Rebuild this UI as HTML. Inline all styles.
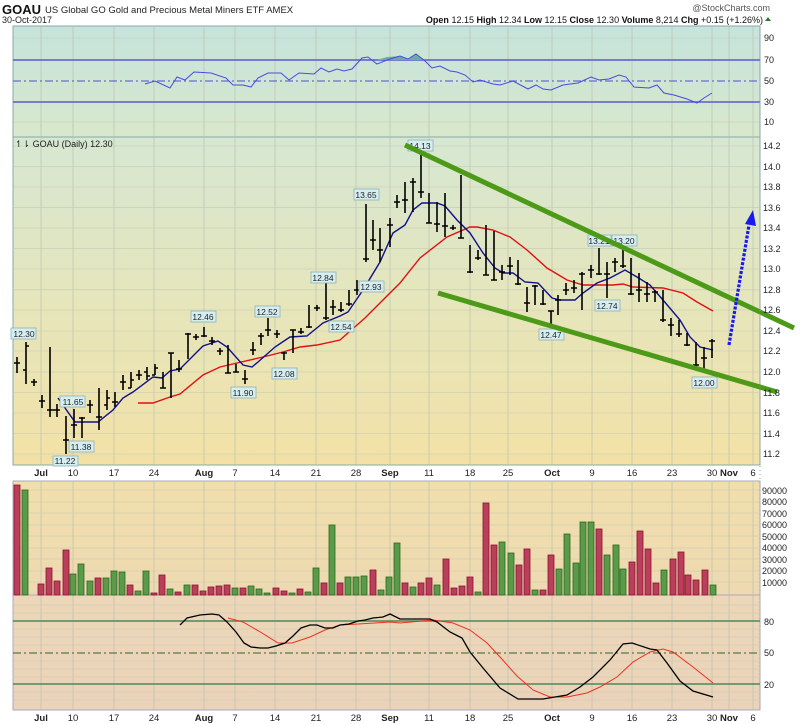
<!DOCTYPE html>
<html><head><meta charset="utf-8"><style>
html,body{margin:0;padding:0;background:#fff;width:800px;height:724px;overflow:hidden}
svg{display:block;font-family:"Liberation Sans",sans-serif}
</style></head><body>
<svg width="800" height="724" viewBox="0 0 800 724" xmlns="http://www.w3.org/2000/svg">
<defs>
<linearGradient id="gr" x1="0" y1="0" x2="0" y2="1"><stop offset="0" stop-color="#c6e3dc"/><stop offset="1" stop-color="#d8e8cc"/></linearGradient>
<linearGradient id="gp" x1="0" y1="0" x2="0" y2="1"><stop offset="0" stop-color="#d6e7d2"/><stop offset="0.45" stop-color="#e4e6be"/><stop offset="1" stop-color="#f3e1a6"/></linearGradient>
<linearGradient id="gv" x1="0" y1="0" x2="0" y2="1"><stop offset="0" stop-color="#f1dfab"/><stop offset="1" stop-color="#eed9b2"/></linearGradient>
<linearGradient id="gs" x1="0" y1="0" x2="0" y2="1"><stop offset="0" stop-color="#edd7b8"/><stop offset="1" stop-color="#ebd2ba"/></linearGradient>
</defs>
<!-- header -->
<text x="2" y="14" font-size="13" font-weight="bold" fill="#111">GOAU</text>
<text x="45" y="13" font-size="9.5" fill="#222">US Global GO Gold and Precious Metal Miners ETF  AMEX</text>
<text x="2" y="23" font-size="9" fill="#222">30-Oct-2017</text>
<text x="770" y="11" font-size="9" fill="#555" text-anchor="end">@StockCharts.com</text>
<text x="763" y="23" font-size="9" fill="#111" text-anchor="end"><tspan font-weight="bold">Open</tspan> 12.15 <tspan font-weight="bold">High</tspan> 12.34 <tspan font-weight="bold">Low</tspan> 12.15 <tspan font-weight="bold">Close</tspan> 12.30 <tspan font-weight="bold">Volume</tspan> 8,214 <tspan font-weight="bold">Chg</tspan> +0.15 (+1.26%)</text>
<polygon points="765,21 771,21 768,17" fill="#2a7a2a"/>

<!-- panels -->
<rect x="13" y="26" width="747" height="111" fill="url(#gr)" stroke="#8aa" stroke-width="1"/>
<rect x="13" y="137" width="747" height="328" fill="url(#gp)" stroke="#8aa" stroke-width="1"/>
<rect x="13" y="481" width="747" height="114" fill="url(#gv)" stroke="#aab" stroke-width="1"/>
<rect x="13" y="595" width="747" height="115" fill="url(#gs)" stroke="#aab" stroke-width="1"/>

<!-- vertical grid -->
<g stroke="#b8bfae" stroke-width="0.8" opacity="0.8">
<path d="M41 26V465M73 26V465M114 26V465M154 26V465M204 26V465M235 26V465M275 26V465M316 26V465M356 26V465M390 26V465M429 26V465M470 26V465M508 26V465M552 26V465M592 26V465M632 26V465M672 26V465M712 26V465M729 26V465M753 26V465"/>
<path d="M41 481V710M73 481V710M114 481V710M154 481V710M204 481V710M235 481V710M275 481V710M316 481V710M356 481V710M390 481V710M429 481V710M470 481V710M508 481V710M552 481V710M592 481V710M632 481V710M672 481V710M712 481V710M729 481V710M753 481V710"/>
</g>
<!-- horizontal grid price -->
<g stroke="#c4cab2" stroke-width="0.6">
<path d="M13 146H760M13 166.5H760M13 187H760M13 207.6H760M13 228H760M13 248.7H760M13 269H760M13 289.8H760M13 310H760M13 331H760M13 351H760M13 372H760M13 392.5H760M13 413H760M13 433.5H760M13 454H760"/>
<path d="M13 38H760M13 122H760"/>
<path d="M13 490H760M13 502H760M13 513H760M13 525H760M13 536H760M13 548H760M13 559H760M13 571H760M13 582H760"/>
<path d="M13 605H760M13 613H760M13 629H760M13 637H760M13 645H760M13 661H760M13 669H760M13 677H760M13 692H760M13 700H760"/>
</g>

<!-- RSI -->
<path d="M13 60H760M13 102H760" stroke="#5a5ad0" stroke-width="1.5"/>
<path d="M13 81H760" stroke="#6a6ad8" stroke-width="1.2" stroke-dasharray="8,3,2,3"/>
<polygon points="377,60 387,57 400,56 408,59 416,54 425,60" fill="#6aaea0"/>
<polyline fill="none" stroke="#4a4ae0" stroke-width="1" points="145,84 155,81 170,88 177,77 185,80 194,72 211,73 226,78 233,85 243,85 251,87 258,78 268,73 281,73 289,80 299,73 314,74 321,68 329,72 337,69 344,71 352,69 362,58 368,57 377,64 387,60 400,56 408,59 416,54 425,61 432,68 440,66 450,71 457,72 465,75 473,82 480,80 493,84 500,85 513,81 528,89 536,85 543,89 551,90 563,85 578,83 591,77 599,80 609,79 619,75 626,77 634,87 649,88 657,85 664,93 674,95 687,99 697,103 704,98 712,93"/>

<!-- price MAs -->
<polyline fill="none" stroke="#e01010" stroke-width="1.4" points="138,403 153,403 170,397 180,394 203,375 220,367 237,363 263,357 283,352 300,347 317,345 340,340 365,318 380,303 400,283 420,258 447,237 470,227 477,227 493,230 510,237 527,250 547,268 567,280 583,285 613,285 623,284 633,287 663,288 683,293 697,302 713,311"/>
<polyline fill="none" stroke="#10108a" stroke-width="1.4" points="58,398 75,422 98,422 113,410 123,398 133,392 153,377 162,378 170,371 180,369 203,346 218,341 227,347 243,365 252,367 258,362 275,347 290,337 307,336 323,323 340,316 348,312 363,290 380,262 393,233 405,225 413,210 422,203 437,203 445,206 457,220 470,233 483,253 495,268 503,273 513,273 525,282 538,283 552,298 560,300 575,300 583,293 597,283 610,278 625,270 637,277 650,285 663,300 680,320 690,337 700,347 713,350"/>

<!-- price bars -->
<path fill="none" stroke="#000" stroke-width="1.6" d="
M17 357V373M14 363h6
M26 342V384M26 346h3M23 370h3
M34 379V386M31 382h6
M42 395V408M39 401h6
M50 347V417M50 410h4M47 410h3
M57 404V417M54 410h6
M66 416V454M63 440h6
M74 409V438M71 425h6
M82 417V438M79 418h6
M90 400V413M87 405h6
M99 388V430M96 417h6
M107 390V410M104 405h3M107 398h3
M115 392V407M112 402h6
M123 375V390M120 382h6
M131 372V388M128 388h3M131 380h3
M139 370V380M136 375h6
M147 367V380M144 372h3M147 376h3
M155 364V375M152 375h3M155 368h3
M163 372V388M160 388h6
M171 353V398M168 353h6
M179 360V372M176 369h6
M188 333V359M185 334h6
M196 334V340M193 337h6
M204 327V337M201 336h6
M212 337V345M209 341h6
M220 348V355M217 351h6
M228 345V373M225 373h6
M236 364V372M233 372h6
M245 370V384M242 379h6
M253 342V355M250 350h6
M261 333V345M258 336h6
M268 318V336M265 330h6
M277 330V338M274 334h6
M284 352V360M281 353h6
M293 330V353M290 330h6
M301 328V334M298 332h6
M309 305V328M306 327h6
M317 305V311M314 308h6
M326 280V320M323 318h6
M333 300V315M330 307h6
M341 302V312M338 310h6
M349 290V306M346 304h6
M357 280V295M354 290h6
M366 204V262M363 259h6
M373 220V250M370 240h6
M380 228V262M377 250h6
M390 218V247M387 225h6
M397 195V208M394 202h6
M405 182V213M402 200h6
M413 178V212M410 182h6
M421 152V198M418 192h6
M429 193V223M426 223h6
M437 202V232M434 224h6
M445 193V237M442 226h6
M453 225V230M450 228h6
M461 175V238M458 238h6
M470 245V273M467 272h6
M478 250V260M475 258h6
M486 225V275M483 275h6
M494 231V280M491 280h6
M502 265V280M499 272h6
M510 257V275M507 266h6
M518 260V285M515 284h6
M527 287V312M524 303h6
M535 285V305M532 286h6
M543 290V305M540 304h6
M551 311V325M548 311h6
M558 295V315M555 300h6
M566 283V295M563 290h6
M574 280V293M571 288h6
M582 272V310M579 274h6
M591 265V278M588 270h6
M599 248V275M596 274h6
M607 262V298M604 274h6
M615 258V272M612 262h6
M623 250V268M620 266h6
M631 258V295M628 294h6
M639 273V302M636 290h6
M647 282V302M644 294h6
M655 290V302M652 292h6
M663 290V322M660 320h6
M671 318V336M668 325h6
M679 320V337M676 334h6
M687 333V346M684 345h6
M696 342V368M693 365h6
M704 347V370M701 358h6
M712 339V358M709 341h6"/>

<!-- price labels -->
<g font-size="8.5" fill="#223" text-anchor="middle">
<g fill="#d6eeee" stroke="#8fb0b8" stroke-width="0.8">
<rect x="11" y="328" width="25" height="11"/><rect x="60" y="396" width="25" height="11"/><rect x="69" y="441" width="25" height="11"/><rect x="53" y="456" width="25" height="10"/>
<rect x="191" y="311" width="25" height="11"/><rect x="231" y="387" width="25" height="11"/><rect x="255" y="306" width="25" height="11"/><rect x="272" y="368" width="25" height="11"/>
<rect x="311" y="272" width="25" height="11"/><rect x="329" y="321" width="25" height="11"/><rect x="354" y="189" width="25" height="11"/><rect x="359" y="281" width="25" height="11"/>
<rect x="408" y="140" width="25" height="11"/><rect x="539" y="329" width="25" height="11"/><rect x="588" y="235" width="23" height="11"/><rect x="612" y="235" width="25" height="11"/>
<rect x="595" y="300" width="25" height="11"/><rect x="692" y="377" width="25" height="11"/>
</g>
<text x="24" y="337">12.30</text><text x="73" y="405">11.65</text><text x="81" y="450">11.38</text><text x="65" y="464">11.22</text>
<text x="203" y="320">12.46</text><text x="243" y="396">11.90</text><text x="267" y="315">12.52</text><text x="284" y="377">12.08</text>
<text x="323" y="281">12.84</text><text x="341" y="330">12.54</text><text x="366" y="198">13.65</text><text x="371" y="290">12.93</text>
<text x="420" y="149">14.13</text><text x="551" y="338">12.47</text><text x="599" y="244">13.21</text><text x="624" y="244">13.20</text>
<text x="607" y="309">12.74</text><text x="704" y="386">12.00</text>
</g>

<!-- trend lines -->
<path d="M405 145L794 328M438 293L777 392" stroke="#4c9a18" stroke-width="5" stroke-linecap="butt"/>
<path d="M729 345L749 225" stroke="#1818f0" stroke-width="3.2" stroke-dasharray="3,1.5"/>
<polygon points="753,210 745,224 756,226" fill="#1818f0"/>

<text x="15" y="147" font-size="9" fill="#222">↿⇂ GOAU (Daily) 12.30</text>

<!-- right axis labels -->
<g font-size="9" fill="#222">
<text x="764" y="41">90</text><text x="764" y="63">70</text><text x="764" y="84">50</text><text x="764" y="105">30</text><text x="764" y="125">10</text>
<text x="763" y="149">14.2</text><text x="763" y="170">14.0</text><text x="763" y="190">13.8</text><text x="763" y="211">13.6</text><text x="763" y="231">13.4</text><text x="763" y="252">13.2</text><text x="763" y="272">13.0</text><text x="763" y="293">12.8</text><text x="763" y="313">12.6</text><text x="763" y="334">12.4</text><text x="763" y="354">12.2</text><text x="763" y="375">12.0</text><text x="763" y="396">11.8</text><text x="763" y="416">11.6</text><text x="763" y="437">11.4</text><text x="763" y="457">11.2</text>
<text x="762" y="494">90000</text><text x="762" y="505">80000</text><text x="762" y="517">70000</text><text x="762" y="528">60000</text><text x="762" y="540">50000</text><text x="762" y="551">40000</text><text x="762" y="563">30000</text><text x="762" y="574">20000</text><text x="762" y="586">10000</text>
<text x="764" y="625">80</text><text x="764" y="656">50</text><text x="764" y="688">20</text>
</g>
<path d="M760 26V710" stroke="#99a" stroke-width="1" stroke-dasharray="1,3"/>

<!-- x axis labels -->
<g font-size="9.5" fill="#222" text-anchor="middle">
<g id="xl">
<text x="41" y="476" font-weight="bold">Jul</text><text x="73" y="476">10</text><text x="114" y="476">17</text><text x="154" y="476">24</text><text x="204" y="476" font-weight="bold">Aug</text><text x="235" y="476">7</text><text x="275" y="476">14</text><text x="316" y="476">21</text><text x="356" y="476">28</text><text x="390" y="476" font-weight="bold">Sep</text><text x="429" y="476">11</text><text x="470" y="476">18</text><text x="508" y="476">25</text><text x="552" y="476" font-weight="bold">Oct</text><text x="592" y="476">9</text><text x="632" y="476">16</text><text x="672" y="476">23</text><text x="712" y="476">30</text><text x="729" y="476" font-weight="bold">Nov</text><text x="753" y="476">6</text>
</g>
<text x="41" y="721" font-weight="bold">Jul</text><text x="73" y="721">10</text><text x="114" y="721">17</text><text x="154" y="721">24</text><text x="204" y="721" font-weight="bold">Aug</text><text x="235" y="721">7</text><text x="275" y="721">14</text><text x="316" y="721">21</text><text x="356" y="721">28</text><text x="390" y="721" font-weight="bold">Sep</text><text x="429" y="721">11</text><text x="470" y="721">18</text><text x="508" y="721">25</text><text x="552" y="721" font-weight="bold">Oct</text><text x="592" y="721">9</text><text x="632" y="721">16</text><text x="672" y="721">23</text><text x="712" y="721">30</text><text x="729" y="721" font-weight="bold">Nov</text><text x="753" y="721">6</text>
</g>

<!-- volume bars -->
<g stroke-width="0.8">
<g fill="#b8405a" stroke="#901030">
<rect x="14" y="485" width="6" height="110"/><rect x="38" y="584" width="6" height="11"/><rect x="46" y="568" width="6" height="27"/><rect x="54" y="581" width="6" height="14"/><rect x="63" y="550" width="6" height="45"/><rect x="95" y="578" width="6" height="17"/><rect x="127" y="585" width="6" height="10"/><rect x="151" y="593" width="6" height="2"/><rect x="159" y="575" width="6" height="20"/><rect x="175" y="592" width="6" height="3"/><rect x="192" y="585" width="6" height="10"/><rect x="200" y="591" width="6" height="4"/><rect x="208" y="587" width="6" height="8"/><rect x="216" y="586" width="6" height="9"/><rect x="224" y="585" width="6" height="10"/><rect x="240" y="588" width="6" height="7"/><rect x="273" y="588" width="6" height="7"/><rect x="281" y="591" width="6" height="4"/><rect x="297" y="589" width="6" height="6"/><rect x="321" y="583" width="6" height="12"/><rect x="337" y="583" width="6" height="12"/><rect x="370" y="570" width="6" height="25"/>
<rect x="402" y="583" width="6" height="12"/><rect x="418" y="583" width="6" height="12"/><rect x="426" y="578" width="6" height="17"/><rect x="443" y="559" width="6" height="36"/><rect x="451" y="588" width="6" height="7"/><rect x="459" y="586" width="6" height="9"/><rect x="467" y="577" width="6" height="18"/><rect x="483" y="503" width="6" height="92"/><rect x="491" y="545" width="6" height="50"/><rect x="516" y="565" width="6" height="30"/><rect x="524" y="549" width="6" height="46"/><rect x="540" y="590" width="6" height="5"/><rect x="548" y="555" width="6" height="40"/><rect x="596" y="529" width="6" height="66"/><rect x="629" y="562" width="6" height="33"/><rect x="637" y="531" width="6" height="64"/><rect x="645" y="549" width="6" height="46"/><rect x="653" y="583" width="6" height="12"/><rect x="670" y="559" width="6" height="36"/><rect x="678" y="552" width="6" height="43"/><rect x="685" y="575" width="6" height="20"/><rect x="693" y="580" width="6" height="15"/><rect x="702" y="570" width="6" height="25"/>
</g>
<g fill="#5a9a4a" stroke="#2a6a1a">
<rect x="22" y="490" width="6" height="105"/><rect x="70" y="574" width="6" height="21"/><rect x="78" y="564" width="6" height="31"/><rect x="87" y="581" width="6" height="14"/><rect x="103" y="578" width="6" height="17"/><rect x="111" y="571" width="6" height="24"/><rect x="119" y="572" width="6" height="23"/><rect x="135" y="591" width="6" height="4"/><rect x="143" y="571" width="6" height="24"/><rect x="167" y="589" width="6" height="6"/><rect x="184" y="585" width="6" height="10"/><rect x="232" y="588" width="6" height="7"/><rect x="248" y="586" width="6" height="9"/><rect x="256" y="589" width="6" height="6"/><rect x="264" y="593" width="6" height="2"/><rect x="289" y="593" width="6" height="2"/><rect x="305" y="592" width="6" height="3"/><rect x="313" y="568" width="6" height="27"/><rect x="329" y="525" width="6" height="70"/><rect x="345" y="577" width="6" height="18"/><rect x="353" y="577" width="6" height="18"/><rect x="361" y="576" width="6" height="19"/><rect x="378" y="590" width="6" height="5"/><rect x="386" y="577" width="6" height="18"/><rect x="394" y="543" width="6" height="52"/>
<rect x="410" y="587" width="6" height="8"/><rect x="434" y="585" width="6" height="10"/><rect x="475" y="592" width="6" height="3"/><rect x="499" y="542" width="6" height="53"/><rect x="508" y="553" width="6" height="42"/><rect x="532" y="590" width="6" height="5"/><rect x="556" y="569" width="6" height="26"/><rect x="564" y="534" width="6" height="61"/><rect x="573" y="563" width="6" height="32"/><rect x="580" y="522" width="6" height="73"/><rect x="588" y="522" width="6" height="73"/><rect x="604" y="555" width="6" height="40"/><rect x="613" y="545" width="6" height="50"/><rect x="620" y="569" width="6" height="26"/><rect x="661" y="570" width="6" height="25"/><rect x="710" y="585" width="6" height="10"/>
</g>
</g>

<!-- stoch -->
<path d="M13 621H760M13 684H760" stroke="#4a8a5a" stroke-width="1.4"/>
<path d="M13 653H760" stroke="#2a6a2a" stroke-width="1" stroke-dasharray="8,3,2,3"/>
<polyline fill="none" stroke="#f03020" stroke-width="1" points="228,618 243,622 262,633 278,643 292,643 310,637 325,630 340,625 358,624 375,623 390,622 400,623 433,620 453,623 470,630 487,643 500,657 517,676 533,690 550,697 567,697 587,693 600,687 617,677 633,662 650,652 663,649 673,652 693,667 713,683"/>
<polyline fill="none" stroke="#000" stroke-width="1.3" points="180,625 187,618 200,615 212,614 219,615 227,622 236,632 244,643 251,647 260,648 268,648 276,646 285,643 293,636 301,628 310,625 317,625 325,628 333,628 340,625 349,624 358,621 365,620 373,618 383,617 390,614 400,619 430,619 437,622 450,632 462,638 470,652 483,668 500,688 518,699 543,699 567,695 580,687 593,677 610,660 623,644 632,643 650,649 657,650 667,663 680,681 693,691 713,697"/>
</svg>
</body></html>
